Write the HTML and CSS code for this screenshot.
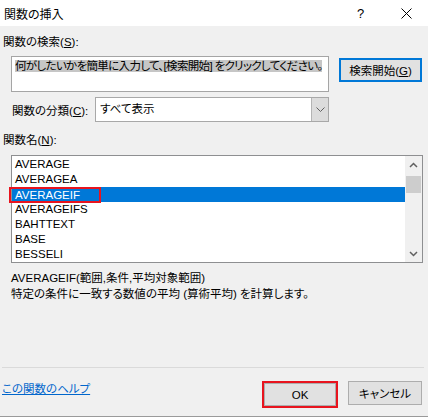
FILE: index.html
```html
<!DOCTYPE html>
<html lang="ja">
<head>
    <meta charset="UTF-8">
    <title>関数の挿入</title>
    <link rel="stylesheet" href="styles.css">
</head>
<body>
<div class="dialog">
    <div class="titlebar">
        <span class="title">関数の挿入</span>
        <span class="help-btn">?</span>
        <span class="close-btn">
            <svg width="11" height="11" viewBox="0 0 11 11"><path d="M0.5 0.5 L10.5 10.5 M10.5 0.5 L0.5 10.5" stroke="#000" stroke-width="1" fill="none"/></svg>
        </span>
    </div>
    <div class="content">
        <div class="label">関数の検索(<u>S</u>):</div>
        <div class="search-row">
            <div class="search-box"><span class="selected-text">何がしたいかを簡単に入力して、[検索開始] をクリックしてください。</span></div>
            <button class="btn search-btn">検索開始(<u>G</u>)</button>
        </div>
        <div class="category-row">
            <span class="category-label">関数の分類(<u>C</u>):</span>
            <div class="select">
                <span class="select-value">すべて表示</span>
                <span class="select-arrow">
                    <svg width="9" height="5" viewBox="0 0 9 5"><path d="M0.5 0.5 L4.5 4.5 L8.5 0.5" stroke="#606060" stroke-width="1" fill="none"/></svg>
                </span>
            </div>
        </div>
        <div class="label name-label">関数名(<u>N</u>):</div>
        <div class="listbox">
            <ul class="items">
                <li>AVERAGE</li>
                <li>AVERAGEA</li>
                <li class="selected"><span class="mark">AVERAGEIF</span></li>
                <li>AVERAGEIFS</li>
                <li>BAHTTEXT</li>
                <li>BASE</li>
                <li>BESSELI</li>
            </ul>
            <div class="scrollbar">
                <div class="arrow">
                    <svg width="9" height="6" viewBox="0 0 9 6"><path d="M1 5 L4.5 1.5 L8 5" stroke="#606060" stroke-width="1.5" fill="none"/></svg>
                </div>
                <div class="track"><div class="thumb"></div></div>
                <div class="arrow">
                    <svg width="9" height="6" viewBox="0 0 9 6"><path d="M1 1 L4.5 4.5 L8 1" stroke="#606060" stroke-width="1.5" fill="none"/></svg>
                </div>
            </div>
        </div>
        <div class="description">
            <div class="syntax">AVERAGEIF(範囲,条件,平均対象範囲)</div>
            <div>特定の条件に一致する数値の平均 (算術平均) を計算します。</div>
        </div>
        <div class="separator"></div>
        <div class="footer">
            <a class="help-link" href="#">この関数のヘルプ</a>
            <div class="buttons">
                <div class="ok-mark"><button class="btn ok-btn">OK</button></div>
                <button class="btn cancel-btn">キャンセル</button>
            </div>
        </div>
    </div>
</div>
</body>
</html>
```

FILE: styles.css
```css
body {
    margin: 0;
    font-family: "Liberation Sans", "Noto Sans CJK JP", sans-serif;
    font-size: 11.5px;
    font-feature-settings: "palt";
    color: #000;
}
.dialog {
    width: 428px;
    height: 417px;
    box-sizing: border-box;
    background-color: #f0f0f0;
    border-bottom: 1px solid #9a9a9a;
    display: flex;
    flex-direction: column;
}
.titlebar {
    height: 26px;
    background-color: #fff;
    display: flex;
    align-items: center;
    padding-left: 4px;
}
.title {
    flex: 1;
    font-size: 12px;
}
.help-btn {
    font-size: 13px;
    width: 20px;
    margin-right: 24px;
}
.close-btn {
    width: 27px;
    display: flex;
}
.content {
    flex: 1;
    display: flex;
    flex-direction: column;
}
.label {
    line-height: 16px;
    margin-top: 8px;
    padding-left: 3px;
}
.search-row {
    display: flex;
    align-items: flex-start;
    margin-top: 6px;
    padding-left: 11px;
}
.search-box {
    width: 318px;
    height: 36px;
    box-sizing: border-box;
    background-color: #fff;
    border: 1px solid #a5a5a5;
    padding: 1px 0 0 3px;
    line-height: 17px;
    white-space: nowrap;
    overflow: hidden;
}
.selected-text {
    background-color: #c6c6c6;
    letter-spacing: -0.65px;
}
.btn {
    font-family: inherit;
    font-size: inherit;
    font-feature-settings: inherit;
    background-color: #e1e1e1;
    border: 1px solid #adadad;
    padding: 0;
    color: #000;
}
.search-btn {
    width: 83px;
    height: 24px;
    margin-top: 2px;
    margin-left: 10px;
    border: 2px solid #0078d7;
}
.category-row {
    display: flex;
    align-items: center;
    margin-top: 5px;
    padding-left: 12px;
}
.category-label {
    width: 83px;
}
.select {
    width: 234px;
    height: 25px;
    box-sizing: border-box;
    border: 1px solid #a8a8a8;
    background-color: #fff;
    display: flex;
}
.select-value {
    flex: 1;
    line-height: 23px;
    padding-left: 4px;
}
.select-arrow {
    width: 16px;
    background-color: #dcdcdc;
    border-left: 1px solid #b4b4b4;
    display: flex;
    align-items: center;
    justify-content: center;
}
.name-label {
    margin-top: 10px;
}
.listbox {
    margin: 7px 0 0 11px;
    width: 412px;
    height: 108px;
    box-sizing: border-box;
    border: 1px solid #8e8f91;
    background-color: #fff;
    display: flex;
}
.items {
    list-style: none;
    margin: 0;
    padding: 1px 0 0 0;
    flex: 1;
}
.items li {
    height: 15px;
    line-height: 15px;
    padding-left: 3px;
}
.items li.selected {
    background-color: #0078d7;
    color: #fff;
    position: relative;
}
.mark {
    position: absolute;
    left: -3px;
    top: 0;
    width: 92px;
    height: 16px;
    box-sizing: border-box;
    border: 2px solid #e8141e;
    padding-left: 4px;
    line-height: 12px;
}
.scrollbar {
    width: 17px;
    background-color: #f0f0f0;
    display: flex;
    flex-direction: column;
}
.arrow {
    height: 17px;
    display: flex;
    align-items: center;
    justify-content: center;
}
.track {
    flex: 1;
    padding: 3px 1px 0 1px;
}
.thumb {
    height: 17px;
    background-color: #cdcdcd;
}
.description {
    margin-top: 7px;
    padding-left: 11px;
    line-height: 16px;
}
.separator {
    margin: 65px 4px 0 2px;
    height: 1px;
    background-color: #dadada;
}
.footer {
    display: flex;
    justify-content: space-between;
    align-items: flex-start;
    margin-top: 13px;
    padding: 0 6px 0 2px;
}
.help-link {
    color: #0066cc;
    margin-top: 1px;
    line-height: 14px;
}
.buttons {
    display: flex;
    align-items: flex-start;
}
.ok-mark {
    width: 76px;
    height: 27px;
    box-sizing: border-box;
    border: 2px solid #e8141e;
    margin-right: 10px;
}
.ok-btn {
    width: 100%;
    height: 100%;
    display: block;
}
.cancel-btn {
    width: 74px;
    height: 24px;
}
```
